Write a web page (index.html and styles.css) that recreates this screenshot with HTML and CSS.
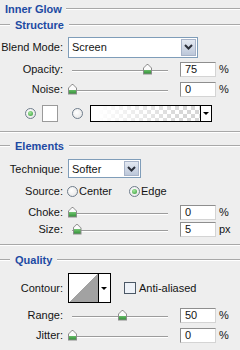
FILE: index.html
```html
<!DOCTYPE html>
<html lang="en">
<head>
    <meta charset="UTF-8">
    <title>Inner Glow</title>
    <link rel="stylesheet" href="styles.css">
</head>
<body>
    <div class="panel">
        <div class="head title"><span>Inner Glow</span><span class="rule"></span></div>
        <div class="head structure"><span class="rule lead"></span><span>Structure</span><span class="rule"></span></div>

        <div class="row r-blend">
            <span class="lbl">Blend Mode:</span>
            <div class="select blend">
                <span>Screen</span>
                <span class="drop"><svg width="9" height="6" viewBox="0 0 9 6"><path d="M1 1l3.5 3.5L8 1" fill="none" stroke="#2b2f3a" stroke-width="2"/></svg></span>
            </div>
        </div>

        <div class="row r-opacity">
            <span class="lbl">Opacity:</span>
            <div class="slider"><span class="thumb" style="left: 75%"></span></div>
            <span class="num">75</span><span class="unit">%</span>
        </div>

        <div class="row r-noise">
            <span class="lbl">Noise:</span>
            <div class="slider"><span class="thumb" style="left: 0%"></span></div>
            <span class="num">0</span><span class="unit">%</span>
        </div>

        <div class="row r-color">
            <span class="radio on"></span>
            <span class="swatch"></span>
            <span class="radio second"></span>
            <div class="gradient">
                <span class="fill"></span>
                <span class="arrow"></span>
            </div>
        </div>

        <div class="sep"></div>

        <div class="head elements"><span class="rule lead"></span><span>Elements</span><span class="rule"></span></div>

        <div class="row r-tech">
            <span class="lbl">Technique:</span>
            <div class="select tech">
                <span>Softer</span>
                <span class="drop"><svg width="9" height="6" viewBox="0 0 9 6"><path d="M1 1l3.5 3.5L8 1" fill="none" stroke="#2b2f3a" stroke-width="2"/></svg></span>
            </div>
        </div>

        <div class="row r-source">
            <span class="lbl src">Source:</span>
            <span class="radio"></span><span class="opt">Center</span>
            <span class="radio on edge"></span><span class="opt">Edge</span>
        </div>

        <div class="row r-choke">
            <span class="lbl">Choke:</span>
            <div class="slider"><span class="thumb" style="left: 0%"></span></div>
            <span class="num">0</span><span class="unit">%</span>
        </div>

        <div class="row r-size">
            <span class="lbl">Size:</span>
            <div class="slider"><span class="thumb" style="left: 4.5%"></span></div>
            <span class="num">5</span><span class="unit">px</span>
        </div>

        <div class="sep sep2"></div>

        <div class="head quality"><span class="rule lead"></span><span>Quality</span><span class="rule"></span></div>

        <div class="row r-contour">
            <span class="lbl">Contour:</span>
            <div class="contour">
                <span class="curve"></span>
                <span class="arrow"></span>
            </div>
            <span class="check"></span><span class="opt">Anti-aliased</span>
        </div>

        <div class="row r-range">
            <span class="lbl">Range:</span>
            <div class="slider"><span class="thumb" style="left: 50%"></span></div>
            <span class="num">50</span><span class="unit">%</span>
        </div>

        <div class="row r-jitter">
            <span class="lbl">Jitter:</span>
            <div class="slider"><span class="thumb" style="left: 0%"></span></div>
            <span class="num">0</span><span class="unit">%</span>
        </div>
    </div>
</body>
</html>
```

FILE: styles.css
```css
/* Base */
body {
    margin: 0;
    font-family: "Liberation Sans", Arial, sans-serif;
    font-size: 11px;
    color: #141414;
    background: #eeeeee;
}

.panel {
    width: 240px;
    height: 350px;
    overflow: hidden;
    display: flex;
    flex-direction: column;
}

/* Group headings */
.head {
    display: flex;
    align-items: center;
    gap: 5px;
    height: 14px;
    font-weight: bold;
    color: #1d4aa3;
    flex: none;
}

.head .rule {
    flex: 1;
    border-top: 1px solid #a8a8a8;
    border-bottom: 1px solid #ffffff;
}

.head .lead {
    flex: 0 0 10px;
}

.title {
    height: 18px;
    padding-left: 5px;
    gap: 4px;
}

.elements {
    margin-top: 6px;
}

.quality {
    margin-top: 7px;
}

.sep {
    flex: none;
    margin-top: 9px;
    border-top: 1px solid #a8a8a8;
    border-bottom: 1px solid #ffffff;
}

.sep2 {
    margin-top: 7px;
}

/* Rows */
.row {
    display: flex;
    align-items: center;
    flex: none;
}

.lbl {
    flex: none;
    width: 63px;
    margin-right: 5px;
    text-align: right;
}

.r-blend { height: 22px; margin-top: 4px; }
.r-opacity { height: 20px; margin-top: 1px; }
.r-noise { height: 20px; }
.r-color { height: 18px; margin-top: 5px; padding-left: 25px; }
.r-tech { height: 19px; margin-top: 6px; }
.r-source { height: 18px; margin-top: 4px; }
.r-choke { height: 16px; margin-top: 4px; }
.r-size { height: 16px; margin-top: 1px; }
.r-contour { height: 30px; margin-top: 6px; }
.r-range { height: 18px; margin-top: 3px; }
.r-jitter { height: 18px; margin-top: 2px; }

/* Drop-down */
.select {
    box-sizing: border-box;
    display: flex;
    align-items: center;
    padding-left: 3px;
    border: 1px solid #7f9db9;
    background: #ffffff;
}

.select.blend {
    width: 130px;
    height: 21px;
}

.select.tech {
    width: 73px;
    height: 19px;
}

.select .drop {
    margin-left: auto;
    margin-right: 1px;
    width: 15px;
    height: calc(100% - 2px);
    box-sizing: border-box;
    display: flex;
    align-items: center;
    justify-content: center;
    border: 1px solid #a7b3c8;
    background: linear-gradient(#e4e9f2, #bcc7d9);
}

/* Sliders */
.slider {
    position: relative;
    flex: none;
    width: 100px;
    height: 11px;
    margin-left: 4px;
}

.slider::before {
    content: "";
    position: absolute;
    left: 0;
    top: 6px;
    width: 96px;
    height: 1px;
    background: #9c9c9c;
    box-shadow: 0 1px 0 #ffffff;
}

.thumb {
    position: absolute;
    top: 0;
    width: 9px;
    height: 11px;
    transform: translateX(-4px);
    background: #8c8c8c;
    clip-path: polygon(50% 0, 100% 40%, 100% 100%, 0 100%, 0 40%);
}

.thumb::after {
    content: "";
    position: absolute;
    inset: 1px;
    background: linear-gradient(#fbfbfb 50%, #6cc06c 50%, #2f8f35);
    clip-path: polygon(50% 0, 100% 40%, 100% 100%, 0 100%, 0 40%);
}

.num {
    box-sizing: border-box;
    flex: none;
    width: 36px;
    height: 15px;
    margin-left: 8px;
    padding-left: 4px;
    line-height: 13px;
    border: 1px solid;
    border-color: #8e8e8e #d4d4d4 #d4d4d4 #8e8e8e;
    background: #ffffff;
}

.unit {
    margin-left: 3px;
}

/* Radios and checkbox */
.radio {
    box-sizing: border-box;
    position: relative;
    flex: none;
    width: 11px;
    height: 11px;
    border: 1px solid #6f7d8c;
    border-radius: 50%;
    background: radial-gradient(circle at 40% 40%, #ffffff, #e2e2e2);
}

.radio.on::after {
    content: "";
    position: absolute;
    left: 2px;
    top: 2px;
    width: 5px;
    height: 5px;
    border-radius: 50%;
    background: radial-gradient(circle at 40% 35%, #a8e8a0, #2f9a35);
}

.radio.second {
    margin-left: 14px;
}

.src {
    margin-right: 4px;
}

.opt {
    margin-left: 1px;
}

.radio.edge {
    margin-left: 17px;
}

.check {
    box-sizing: border-box;
    flex: none;
    width: 12px;
    height: 12px;
    margin-left: 13px;
    margin-right: 2px;
    border: 1px solid #4b5866;
    background: #eef2f8;
}

/* Colour and gradient */
.swatch {
    box-sizing: border-box;
    flex: none;
    width: 16px;
    height: 17px;
    margin-left: 6px;
    border: 1px solid #9a9a9a;
    background: #ffffff;
}

.gradient {
    box-sizing: border-box;
    display: flex;
    flex: none;
    width: 122px;
    height: 17px;
    margin-left: 7px;
    border: 1px solid #000000;
}

.gradient .fill {
    flex: 1;
    background:
        linear-gradient(to right, #ffffff 5%, rgba(255, 255, 255, 0) 85%),
        conic-gradient(#d6d6d6 25%, #ffffff 0 50%, #d6d6d6 0 75%, #ffffff 0) 0 0 / 8px 8px;
}

.arrow {
    position: relative;
    flex: none;
    width: 10px;
    border-left: 1px solid #000000;
    background: #ffffff;
}

.arrow::after {
    content: "";
    position: absolute;
    left: 2px;
    top: 50%;
    margin-top: -1px;
    border-left: 3px solid transparent;
    border-right: 3px solid transparent;
    border-top: 3px solid #000000;
}

/* Contour */
.contour {
    box-sizing: border-box;
    display: flex;
    flex: none;
    width: 43px;
    height: 30px;
    border: 1px solid #000000;
}

.contour .curve {
    flex: 1;
    background: linear-gradient(to bottom right, #ffffff 50%, #a2a2a2 50%);
}

.contour .arrow {
    width: 11px;
}
```
